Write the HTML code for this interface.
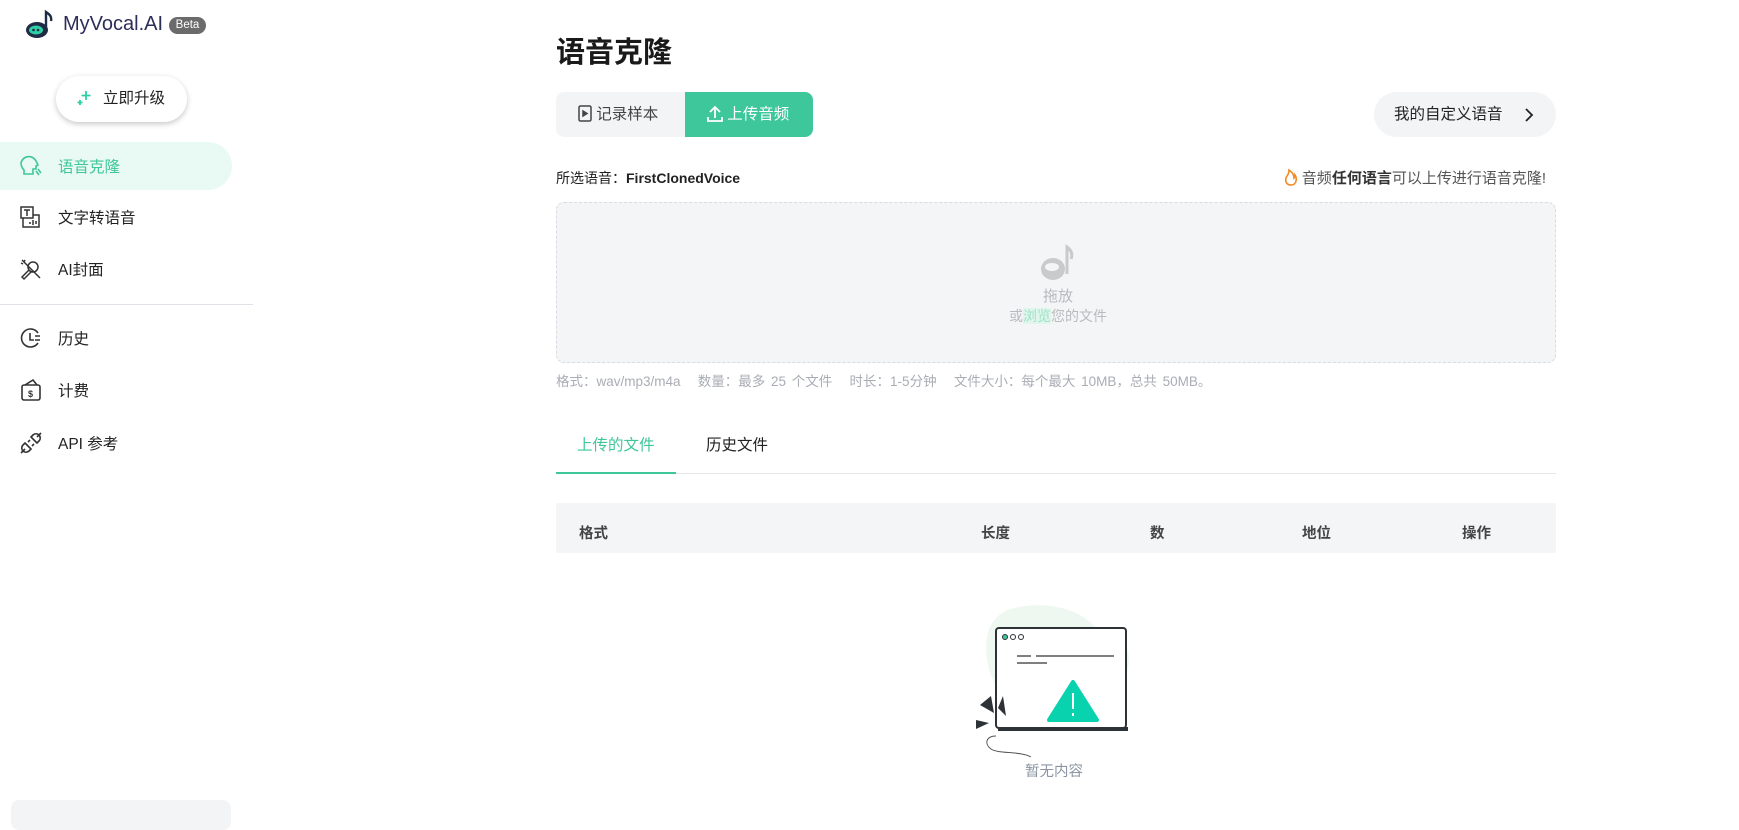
<!DOCTYPE html>
<html><head><meta charset="utf-8"><style>
*{box-sizing:border-box;margin:0;padding:0}
body{width:1739px;height:813px;overflow:hidden;background:#fff;font-family:"Liberation Sans","Noto Sans CJK SC",sans-serif;color:#222;position:relative}
.a{position:absolute}
.nav{position:absolute;left:0;width:232px;height:48px;display:flex;align-items:center;font-size:15.5px;color:#222}
.nav svg{position:absolute;left:19px}
.nav span{position:absolute;left:58px}
.th{position:absolute;top:522px;font-size:14.5px;font-weight:bold;color:#444}
</style></head><body>
<svg class="a" style="left:25px;top:9px" width="30" height="30" viewBox="0 0 30 30"><ellipse cx="12" cy="21" rx="11" ry="8" fill="#1f2a44"/><ellipse cx="11" cy="21" rx="7" ry="4.5" fill="#2ecfa5"/><circle cx="8.5" cy="21" r="1.3" fill="#1f2a44"/><circle cx="13" cy="21" r="1.3" fill="#1f2a44"/><path d="M21 21V3c3 2 6 4 5 9" stroke="#1f2a44" stroke-width="2.4" fill="none"/></svg>
<div class="a" style="left:63px;top:13px;font-size:20px;color:#2c2e5a">MyVocal.AI</div>
<div class="a" style="left:169px;top:17px;width:37px;height:17px;border-radius:9px;background:#6b6b6b;color:#fff;font-size:11.5px;text-align:center;line-height:17px">Beta</div>
<div class="a" style="left:56px;top:76px;width:131px;height:46px;border-radius:23px;background:#fff;box-shadow:0 2px 6px rgba(0,0,0,.22);font-size:15.5px;line-height:46px;padding-left:47px">立即升级</div>
<svg class="a" style="left:77px;top:90px" width="16" height="16" viewBox="0 0 16 16"><path d="M9 1v9M4.5 5.5h9M3 10v5M0.5 12.5h5" stroke="#2ecfa5" stroke-width="1.8"/></svg>
<div class="nav" style="top:142px;background:#e9f9f4;border-radius:0 24px 24px 0;color:#3ec79a"><svg width="24" height="24" viewBox="0 0 24 24" fill="none" stroke="#3ec79a" stroke-width="1.6"><path d="M5 20v-4c-2-2-3-4-3-7a8 8 0 0 1 15 -2l2 4-2 1v3h-3v5z"/><path d="M19 15l3 4M17 17l3 4"/></svg><span>语音克隆</span></div>
<div class="nav" style="top:193px"><svg width="24" height="24" viewBox="0 0 24 24" fill="none" stroke="#333" stroke-width="1.5"><rect x="2" y="2" width="12" height="11"/><path d="M5 5h6M8 5v6M4 13v9h16V10h-6M11 17v2M14 15v5M17 16v3"/></svg><span>文字转语音</span></div>
<div class="nav" style="top:245px"><svg width="24" height="24" viewBox="0 0 24 24" fill="none" stroke="#333" stroke-width="1.5"><ellipse cx="14" cy="10" rx="5" ry="5"/><path d="M10 13l-7 7 2 2 7-7M3 3l18 18M5 5l1-2M4 7l-2-1"/></svg><span>AI封面</span></div>
<div class="a" style="left:0;top:304px;width:253px;height:1px;background:#dfe3e8"></div>
<div class="nav" style="top:314px"><svg width="24" height="24" viewBox="0 0 24 24" fill="none" stroke="#333" stroke-width="1.6"><path d="M19 7A9 9 0 1 0 19 17"/><path d="M11 7v7h4M16 10h5M16 14h5"/></svg><span>历史</span></div>
<div class="nav" style="top:366px"><svg width="24" height="24" viewBox="0 0 24 24" fill="none" stroke="#333" stroke-width="1.6"><rect x="3" y="7" width="18" height="15" rx="2"/><path d="M6 7l8-5 4 5"/><text x="9" y="19" font-size="9" fill="#333" stroke="none" font-weight="bold">$</text></svg><span>计费</span></div>
<div class="nav" style="top:419px"><svg width="24" height="24" viewBox="0 0 24 24" fill="none" stroke="#333" stroke-width="1.6"><path d="M2 22l4-4M22 2l-4 4M6 12l6 6-2 2a4 4 0 0 1-6-6zM18 12l-6-6 2-2a4 4 0 0 1 6 6zM9 11l2-2M13 15l2-2"/></svg><span>API 参考</span></div>
<div class="a" style="left:11px;top:800px;width:220px;height:30px;border-radius:8px;background:#f3f4f6"></div>
<div class="a" style="left:556px;top:29px;font-size:29px;font-weight:bold;color:#1a1a1a">语音克隆</div>
<div class="a" style="left:556px;top:92px;width:257px;height:45px;border-radius:8px;background:#f3f4f6;overflow:hidden">
 <div class="a" style="left:22px;top:0;line-height:45px;font-size:15.5px;color:#444">
  <svg style="vertical-align:-3px" width="14" height="17" viewBox="0 0 14 17" fill="none" stroke="#444" stroke-width="1.5"><rect x="1" y="1" width="12" height="15" rx="1.5"/><path d="M5 6l4 2.5-4 2.5z" fill="#444"/></svg> 记录样本</div>
 <div class="a" style="left:129px;top:0;width:128px;height:45px;background:#3ec79a;color:#fff;line-height:45px;font-size:15.5px;padding-left:22px">
  <svg style="vertical-align:-3px" width="16" height="17" viewBox="0 0 16 17" fill="none" stroke="#fff" stroke-width="1.8"><path d="M8 13V2M3 7l5-5 5 5M1 12v4h14v-4"/></svg> 上传音频</div>
</div>
<div class="a" style="left:1374px;top:92px;width:182px;height:45px;border-radius:23px;background:#f3f4f6;font-size:15.5px;line-height:45px;padding-left:20px;color:#222">我的自定义语音<svg style="position:absolute;right:22px;top:15px" width="10" height="16" viewBox="0 0 10 16" fill="none" stroke="#222" stroke-width="1.8"><path d="M2 2l6 6-6 6"/></svg></div>
<div class="a" style="left:556px;top:168px;font-size:14px;color:#222">所选语音：<b>FirstClonedVoice</b></div>
<div class="a" style="right:193px;top:167px;font-size:15px;color:#555"><svg style="vertical-align:-3px" width="14" height="18" viewBox="0 0 14 18" fill="none" stroke="#f08a24" stroke-width="1.6"><path d="M7 17c-4 0-6-3-5-7 1-3 3-3 3-8 3 2 5 5 5 8 1-1 1-2 1-3 2 3 2 10-4 10z"/></svg> 音频<b style="color:#333">任何语言</b>可以上传进行语音克隆!</div>
<div class="a" style="left:556px;top:202px;width:1000px;height:161px;border:1px dashed #d8dbe0;border-radius:8px;background:#f4f5f7"></div>
<svg class="a" style="left:1040px;top:244px" width="36" height="38" viewBox="0 0 36 38"><ellipse cx="13" cy="25" rx="12" ry="11" fill="#c9cacc"/><ellipse cx="12" cy="23" rx="7" ry="4" fill="#f4f5f7"/><path d="M27 30V3c4 3 6 7 4 12" stroke="#c9cacc" stroke-width="3" fill="none"/></svg>
<div class="a" style="left:997px;top:285px;width:122px;text-align:center;font-size:15px;color:#b8babd">拖放</div>
<div class="a" style="left:957px;top:306px;width:202px;text-align:center;font-size:14px;color:#b8babd">或<span style="color:#9ee3c8;background:#e0f5ec">浏览</span>您的文件</div>
<div class="a" style="left:556px;top:370px;font-size:13.5px;color:#a9adb4;word-spacing:2px">格式：wav/mp3/m4a &nbsp;&nbsp;数量：最多 25 个文件 &nbsp;&nbsp;时长：1-5分钟 &nbsp;&nbsp;文件大小：每个最大 10MB，总共 50MB。</div>
<div class="a" style="left:577px;top:433px;font-size:15.5px;color:#3ec79a">上传的文件</div>
<div class="a" style="left:706px;top:433px;font-size:15.5px;color:#222">历史文件</div>
<div class="a" style="left:556px;top:473px;width:1000px;height:1px;background:#e6e8eb"></div>
<div class="a" style="left:556px;top:472px;width:120px;height:2px;background:#3ec79a"></div>
<div class="a" style="left:556px;top:503px;width:1000px;height:50px;background:#f4f5f7"></div>
<div class="th" style="left:579px">格式</div>
<div class="th" style="left:981px">长度</div>
<div class="th" style="left:1150px">数</div>
<div class="th" style="left:1302px">地位</div>
<div class="th" style="left:1462px">操作</div>
<svg class="a" style="left:958px;top:600px" width="200" height="160" viewBox="0 0 200 160">
<path d="M50 10c30-10 70-5 90 20 25 0 40 25 25 50-10 20-40 30-70 25-30 0-60-10-65-40C25 40 30 18 50 10z" fill="#eef8f1"/>
<rect x="38" y="28" width="130" height="100" rx="3" fill="#fff" stroke="#2d3236" stroke-width="2"/>
<rect x="40" y="127" width="130" height="4" fill="#2d3236"/>
<circle cx="47" cy="37" r="2.5" fill="#3ec79a" stroke="#2d3236"/><circle cx="55" cy="37" r="2.5" fill="none" stroke="#2d3236"/><circle cx="63" cy="37" r="2.5" fill="none" stroke="#2d3236"/>
<path d="M59 56h14M78 56h78M59 63h30" stroke="#555" stroke-width="1.5"/>
<path d="M115 82l24 38h-48z" fill="#08d3ae" stroke="#08d3ae" stroke-width="4" stroke-linejoin="round"/>
<path d="M115 93v16M115 113v3" stroke="#fff" stroke-width="2"/>
<path d="M22 105l14 8-3-17zM18 120l13 3-13 6zM40 108l5-12 3 20z" fill="#2d3236"/>
<path d="M38 136c-10 0-12 8-5 13s30 2 40 8" stroke="#555" fill="none"/>
</svg>
<div class="a" style="left:1025px;top:760px;font-size:14.5px;color:#8c95a3">暂无内容</div>
</body></html>
